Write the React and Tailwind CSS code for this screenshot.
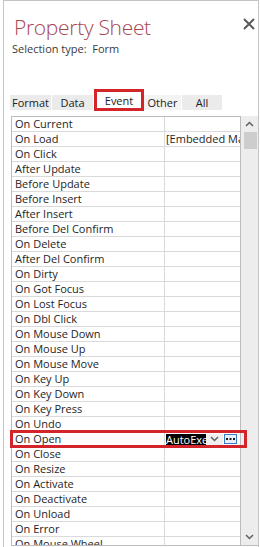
import React from "react";

const events = [
  "On Current",
  "On Load",
  "On Click",
  "After Update",
  "Before Update",
  "Before Insert",
  "After Insert",
  "Before Del Confirm",
  "On Delete",
  "After Del Confirm",
  "On Dirty",
  "On Got Focus",
  "On Lost Focus",
  "On Dbl Click",
  "On Mouse Down",
  "On Mouse Up",
  "On Mouse Move",
  "On Key Up",
  "On Key Down",
  "On Key Press",
  "On Undo",
  "On Open",
  "On Close",
  "On Resize",
  "On Activate",
  "On Deactivate",
  "On Unload",
  "On Error",
  "On Mouse Wheel",
];

const tabs = [
  { label: "Format", w: "w-[42px]", bg: "bg-[#ebebeb]" },
  { label: "Data", w: "w-[42px]", bg: "bg-[#ebebeb]" },
  { label: "Event", w: "w-[50px]", active: true },
  { label: "Other", w: "w-[38px]", bg: "bg-[#f3f3f3]" },
  { label: "All", w: "w-[41px]", bg: "bg-[#ebebeb]" },
];

function Chevron({ up }) {
  return (
    <svg width="9" height="6" viewBox="0 0 9 6" className="block">
      <polyline
        points={up ? "1,5 4.5,1.5 8,5" : "1,1 4.5,4.5 8,1"}
        fill="none"
        stroke="#606060"
        strokeWidth="1.5"
      />
    </svg>
  );
}

export default function App() {
  return (
    <div
      className="w-[260px] h-[547px] overflow-hidden bg-white pl-[3px] relative"
      style={{ fontFamily: '"Open Sans", "Noto Sans", sans-serif' }}
    >
      <div className="w-[256px] h-full border-l border-t border-r border-[#c4c4c4]">
        {/* en-tête */}
        <div className="flex justify-between items-start pl-[10px] pr-[3px] pt-[13px]">
          <h1 className="text-[21px] leading-[26px] font-light text-[#a8464f] tracking-[-0.3px]">
            Property Sheet
          </h1>
          <svg width="12" height="12" viewBox="0 0 12 12" className="mt-[4px]">
            <path d="M1 1 L11 11 M11 1 L1 11" stroke="#5a5a5a" strokeWidth="2" />
          </svg>
        </div>
        <div className="pl-[8px] mt-[2px] text-[11px] leading-[14px] text-[#3a3a3a] whitespace-pre">
          Selection type:  Form
        </div>

        {/* onglets */}
        <div className="flex items-end ml-[6px] mt-[33px] h-[22px]">
          {tabs.map((t) =>
            t.active ? (
              <div
                key={t.label}
                className={`${t.w} h-[22px] border-[3px] border-[#d3242a] bg-white text-[11px] leading-[13px] text-[#222] text-center pt-[2px]`}
              >
                {t.label}
              </div>
            ) : (
              <div
                key={t.label}
                className={`${t.w} h-[15px] mb-[1px] ${t.bg} border-r border-white text-[11px] leading-[15px] text-[#222] text-center`}
              >
                {t.label}
              </div>
            )
          )}
        </div>

        {/* tableau + barre de défilement */}
        <div className="flex mt-[5px] ml-[7px] h-[430px]">
          <div className="w-[230px] h-full border border-[#bcbcbc] overflow-hidden">
            {events.map((ev) => (
              <div
                key={ev}
                className="flex h-[15px] border-b border-[#dadada] text-[11px] leading-[14px] text-[#1e1e1e]"
              >
                <div className="w-[153px] shrink-0 border-r border-[#dadada] pl-[3px] whitespace-nowrap overflow-hidden">
                  {ev}
                </div>
                <div className="flex-1 min-w-0 flex items-center overflow-hidden">
                  {ev === "On Load" && (
                    <span className="pl-[1px] whitespace-nowrap">[Embedded Macro]</span>
                  )}
                  {ev === "On Open" && (
                    <div className="flex items-center h-full">
                      <span className="ml-[1px] w-[40px] h-[11px] bg-black text-white leading-[11px] overflow-hidden whitespace-nowrap">
                        AutoExec
                      </span>
                      <span className="w-[17px] h-[11px] flex items-center justify-center bg-[#efefef]">
                        <Chevron />
                      </span>
                      <span className="ml-[1px] w-[13px] h-[10px] border border-[#3b7bc4] bg-[#e8f1fb] flex items-center justify-center">
                        <svg width="9" height="2" viewBox="0 0 9 2" className="block">
                          <rect x="0" y="0" width="2" height="2" fill="#1a1a1a" />
                          <rect x="3.5" y="0" width="2" height="2" fill="#1a1a1a" />
                          <rect x="7" y="0" width="2" height="2" fill="#1a1a1a" />
                        </svg>
                      </span>
                    </div>
                  )}
                </div>
              </div>
            ))}
          </div>
          <div className="w-[17px] h-full bg-[#ededed] border-b border-[#bcbcbc] flex flex-col items-center">
            <div className="h-[16px] flex items-center justify-center">
              <Chevron up />
            </div>
            <div className="w-[13px] h-[17px] bg-[#cdcdcd] ml-[1px]" />
            <div className="flex-1" />
            <div className="h-[16px] flex items-center justify-center">
              <Chevron />
            </div>
          </div>
        </div>
      </div>

      {/* encadré rouge de la ligne On Open */}
      <div className="absolute left-[10px] top-[430px] w-[237px] h-[18px] border-[3px] border-[#d3242a] pointer-events-none" />
    </div>
  );
}
